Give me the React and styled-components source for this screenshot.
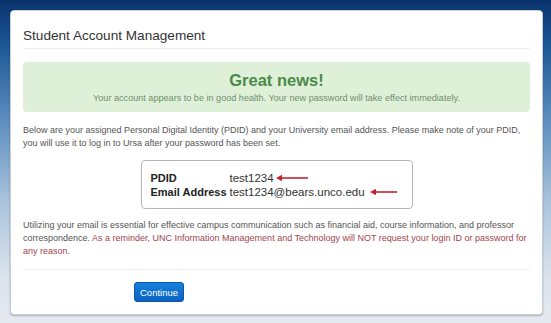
import React from 'react';
import styled, { createGlobalStyle } from 'styled-components';

const GlobalStyle = createGlobalStyle`
  html, body {
    margin: 0;
    padding: 0;
  }
  body {
    width: 551px;
    height: 323px;
    overflow: hidden;
    font-family: "Liberation Sans", Arial, sans-serif;
    background: linear-gradient(to bottom, #0a336e 0%, #1d5796 14%, #5f90c0 38%, #a9c3dc 62%, #dbe3ec 86%, #e5eaf0 100%);
  }
`;

const Page = styled.div`
  padding: 10px 8px 9px 10px;
`;

const Card = styled.div`
  background: #fff;
  border-radius: 4px;
  border: 1px solid #c9ced4;
  box-shadow: 0 1px 2px rgba(0, 0, 0, 0.25);
  padding: 0 12px 12px;
`;

const Header = styled.div`
  padding: 16px 0 3px;
  border-bottom: 1px solid #eeeeee;
`;

const Title = styled.h1`
  margin: 0;
  font-size: 13.6px;
  line-height: 18px;
  font-weight: normal;
  color: #333;
`;

const Alert = styled.div`
  margin-top: 13px;
  background: #dff0d8;
  border-radius: 4px;
  padding: 8px 0 7px;
  text-align: center;
`;

const AlertHeading = styled.div`
  font-size: 16.5px;
  font-weight: bold;
  line-height: 20px;
  color: #4b8a4b;
`;

const AlertText = styled.div`
  margin-top: 1px;
  font-size: 9.1px;
  line-height: 14px;
  color: #6f8f6f;
`;

const Paragraph = styled.p`
  margin: ${(p) => p.$top || 12}px 0 0;
  font-size: 9px;
  line-height: 13px;
  color: #555;
`;

const Warning = styled.span`
  color: #a2454f;
`;

const InfoBox = styled.div`
  width: 252px;
  margin: 10px auto 0;
  border: 1px solid #b5b5b5;
  border-radius: 4px;
  padding: 10px 9px 9px;
`;

const InfoRow = styled.div`
  display: flex;
  align-items: center;
  line-height: 14px;
  font-size: 11.5px;
  color: #222;
  white-space: nowrap;
`;

const Label = styled.span`
  width: 79px;
  flex: none;
  font-weight: bold;
  font-size: 11px;
`;

const Value = styled.span`
  color: #333;
`;

const Arrow = styled.svg`
  margin-left: ${(p) => p.$gap}px;
  flex: none;
`;

const Divider = styled.div`
  margin-top: 11px;
  border-top: 1px solid #eeeeee;
`;

const Button = styled.button`
  margin: 12px 0 0 111px;
  width: 50px;
  height: 20px;
  padding: 0;
  border: 1px solid #0c55a8;
  border-radius: 3px;
  background: linear-gradient(to bottom, #1680dc 0%, #0a62c2 100%);
  color: #fff;
  font-family: "Liberation Sans", Arial, sans-serif;
  font-size: 9.5px;
  cursor: pointer;
`;

const RedArrow = ({ width, gap }) => (
  <Arrow $gap={gap} width={width} height="8" viewBox={`0 0 ${width} 8`}>
    <line x1="3" y1="4" x2={width} y2="4" stroke="#c4242e" strokeWidth="1.6" />
    <polygon points="0,4 6,0.8 6,7.2" fill="#c4242e" />
  </Arrow>
);

export default function App() {
  return (
    <>
      <GlobalStyle />
      <Page>
        <Card>
          <Header>
            <Title>Student Account Management</Title>
          </Header>
          <Alert>
            <AlertHeading>Great news!</AlertHeading>
            <AlertText>
              Your account appears to be in good health. Your new password will take effect immediately.
            </AlertText>
          </Alert>
          <Paragraph>
            Below are your assigned Personal Digital Identity (PDID) and your University email address. Please make note of your PDID,
            you will use it to log in to Ursa after your password has been set.
          </Paragraph>
          <InfoBox>
            <InfoRow>
              <Label>PDID</Label>
              <Value>test1234</Value>
              <RedArrow width={32} gap={2} />
            </InfoRow>
            <InfoRow>
              <Label>Email Address</Label>
              <Value>test1234@bears.unco.edu</Value>
              <RedArrow width={27} gap={5} />
            </InfoRow>
          </InfoBox>
          <Paragraph $top={10}>
            Utilizing your email is essential for effective campus communication such as financial aid, course information, and professor
            correspondence. <Warning>As a reminder, UNC Information Management and Technology will NOT request your login ID or password for
            any reason.</Warning>
          </Paragraph>
          <Divider />
          <Button>Continue</Button>
        </Card>
      </Page>
    </>
  );
}
